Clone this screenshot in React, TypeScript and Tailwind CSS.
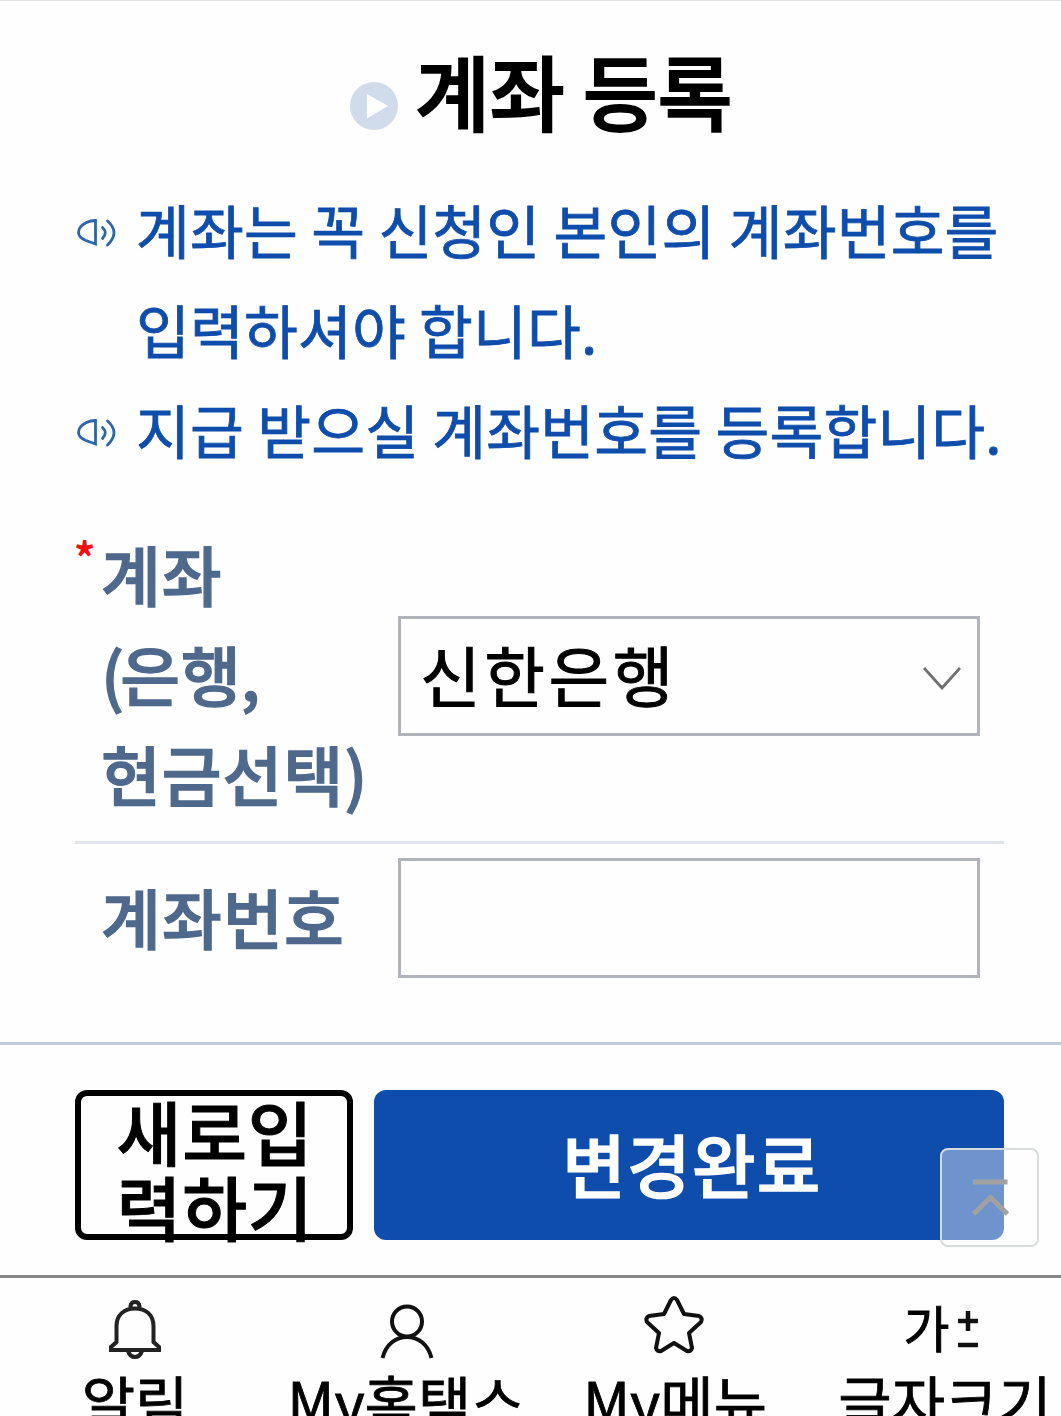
import React from "react";

function Speaker() {
  return (
    <svg className="mt-[37px] ml-[77px] h-[28px] w-[59px] shrink-0" viewBox="0 0 59 28" fill="none" stroke="#2f63ae" strokeWidth="2.8" strokeLinecap="round">
      <path d="M18.500 1.500V25L9 21.500C4 19.500 1.500 17 1.500 13.500C1.500 10 4.500 6 9.500 3.500C12 2.300 15 1.500 18.500 1.500Z" />
      <path d="M25.500 8.500Q31 13.500 25.500 19.500M30.500 2Q43.500 13.500 30.500 26" />
    </svg>
  );
}

function Notice({ lines }: { lines: string[] }) {
  return (
    <li className="flex h-[100px] shrink-0 first:h-[200px]">
      <Speaker />
      <div className="-mt-[3.5px] whitespace-nowrap text-[58.5px] leading-[100px] font-normal tracking-[0.15px] text-[#0f4dac] [-webkit-text-stroke:0.8px_#0f4dac]">
        {lines.map((l) => (
          <div key={l}>{l}</div>
        ))}
      </div>
    </li>
  );
}

function NavItem({ icon, label, cls }: { icon: React.ReactNode; label: string; cls: string }) {
  return (
    <a className={`flex shrink-0 flex-col items-center ${cls}`}>
      <span className="flex h-[87px] shrink-0 items-start">{icon}</span>
      <span className="shrink-0 whitespace-nowrap text-[58px] leading-[70px] [-webkit-text-stroke:0.8px_black]">{label}</span>
    </a>
  );
}

export default function App() {
  return (
    <div className="relative flex h-[1416px] w-[1061px] flex-col overflow-hidden border-t border-[#e4e4e4] bg-[#fefefe] font-['Noto_Sans_CJK_KR',sans-serif] text-black">
      <header className="flex h-[181px] shrink-0 pl-[350px]">
        <svg className="mt-[81px] h-[48px] w-[48px] shrink-0" viewBox="0 0 48 48">
          <circle cx="24" cy="24" r="24" fill="#d0dcec" />
          <path d="M17 12v24.500L38 24Z" fill="#fff" />
        </svg>
        <h1 className="mt-[28px] ml-[17px] whitespace-nowrap text-[81.5px] leading-[120px] font-medium tracking-[-0.2px] [-webkit-text-stroke:1.800px_black]">계좌 등록</h1>
      </header>

      <ul className="flex h-[320px] shrink-0 flex-col">
        <Notice lines={["계좌는 꼭 신청인 본인의 계좌번호를", "입력하셔야 합니다."]} />
        <Notice lines={["지급 받으실 계좌번호를 등록합니다."]} />
      </ul>

      <section className="ml-[75px] flex h-[342px] w-[929px] shrink-0 border-b-[3px] border-[#e1e3eb]">
        <span className="mt-[29px] w-[26px] text-[42px] leading-[50px] font-bold text-[#f01010]"><span className="-ml-[1px]">*</span></span>
        <label className="mt-[21px] w-[297px] whitespace-nowrap text-[65px] leading-[100px] font-medium tracking-[1px] text-[#4f698d] [-webkit-text-stroke:1.300px_#4f698d]">
          계좌<br /><span className="mr-[-5px]">(</span>은행<span className="-ml-[1px]">,</span><br />현금선택)
        </label>
        <div className="mt-[114px] flex h-[120px] w-[582px] shrink-0 items-center border-[3px] border-[#b0b3b9] pr-4 pb-[6px] pl-[19px]">
          <span className="flex-1 text-[66px] leading-[108px] tracking-[3.500px] [-webkit-text-stroke:1px_black]">신한은행</span>
          <svg className="mt-[9px] h-[24px] w-[38px]" viewBox="0 0 38 24" fill="none" stroke="#707070" strokeWidth="2.800"><path d="M1 2L19 22L37 2" /></svg>
        </div>
      </section>

      <section className="ml-[75px] flex h-[198px] w-[929px] shrink-0">
        <label className="mt-[22px] w-[323px] pl-[26px] text-[65px] leading-[100px] font-medium tracking-[1.200px] text-[#4f698d] [-webkit-text-stroke:1.300px_#4f698d]">계좌번호</label>
        <input className="mt-[14px] h-[120px] w-[582px] border-[3px] border-[#b0b3b9]" />
      </section>

      <div className="flex h-[233px] shrink-0 gap-[21px] border-t-[3px] border-[#bfcbdc] pt-[45px] pl-[75px]">
        <button className="flex h-[150px] w-[278px] justify-center rounded-[12px] border-[6px] border-black text-[70.5px] leading-[75.5px] font-medium tracking-[0.800px] [-webkit-text-stroke:1px_black]">
          <span className="-mt-[3.5px] ml-[2px] whitespace-nowrap">새로입<br />력하기</span>
        </button>
        <button className="h-[150px] w-[630px] rounded-[12px] bg-[#0f4dac] pb-[4px] pl-[6px] text-[69px] leading-[146px] font-medium tracking-[1.400px] text-white [-webkit-text-stroke:1.400px_white]">변경완료</button>
      </div>

      <nav className="flex h-[141px] shrink-0 border-t-[3px] border-[#858585]">
        <NavItem label="알림" cls="ml-[82px] w-[106px]" icon={
          <svg className="mt-[22px] h-[60px] w-[52px]" viewBox="0 0 52 60" fill="none" stroke="#222" strokeWidth="4">
            <path d="M21.500 8.500V6Q22 2 26 2Q30 2 30.500 6V8.500M7.500 42V26C7.500 15 15 8.500 26 8.500C37 8.500 44.500 15 44.500 26V42L50 47V50H2V47Z" />
            <path d="M19 51Q21 57 26 57Q31 57 33 51" />
          </svg>} />
        <NavItem label="My홈택스" cls="ml-[100px] w-[236px]" icon={
          <svg className="mt-[26px] ml-[2px] h-[55px] w-[54px]" viewBox="0 0 54 55" fill="none" stroke="#111" strokeWidth="4">
            <circle cx="27" cy="17.500" r="15" />
            <path d="M2.500 54C6 40 16 33 27 33C38 33 48 40 51.500 54" />
          </svg>} />
        <NavItem label="My메뉴" cls="ml-[60px] w-[182px]" icon={
          <svg className="mt-[18px] mr-[2px] h-[58px] w-[60px]" viewBox="0 0 60 58" fill="none" stroke="#111" strokeWidth="4" strokeLinejoin="round">
            <path d="M27 4Q30 0 33 4L40 18L55 20Q59 22 57 26L45 37L48 52Q47 56 43 55L30 47L17 55Q13 56 12 52L15 37L3 26Q1 22 5 20L20 18Z" />
          </svg>} />
        <NavItem label="글자크기" cls="ml-[70px] w-[218px]" icon={
          <span className="mr-[9px] flex pt-[18px]">
            <span className="text-[50px] leading-[60px] [-webkit-text-stroke:0.9px_black]">가</span>
            <svg className="mt-[14px] ml-[8px] h-[40px] w-[20px]" viewBox="0 0 20 40" stroke="#111" strokeWidth="4.500"><path d="M0 11H20M10 1V21M0 35H20" /></svg>
          </span>} />
      </nav>

      <button className="absolute top-[1147px] left-[940px] h-[99px] w-[99px] rounded-[8px] border-2 border-[#d9dcdc] bg-white/40">
        <svg className="h-full w-full" viewBox="0 0 95 95" fill="none" stroke="#a1a1a1" strokeWidth="5">
          <path d="M31 32H65.500M31.500 64L48.500 47.500L65.500 64" />
        </svg>
      </button>
    </div>
  );
}
